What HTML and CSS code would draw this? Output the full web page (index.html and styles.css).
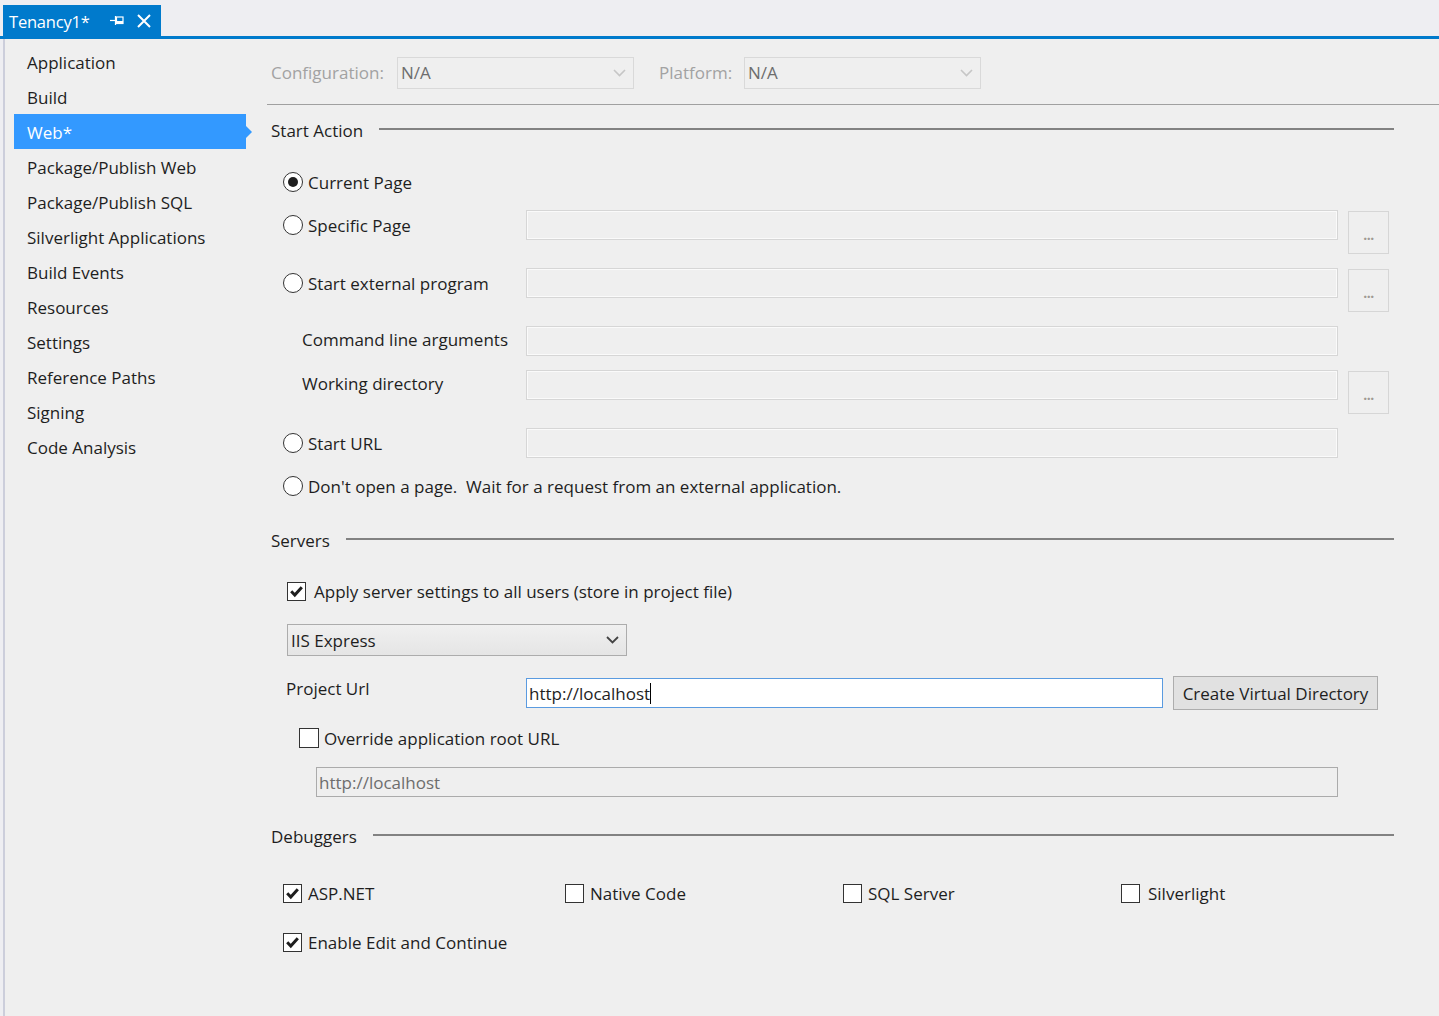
FILE: index.html
```html
<!DOCTYPE html>
<html>
<head>
<meta charset="utf-8">
<link rel="stylesheet" href="styles.css">
</head>
<body>
<div class="tabstrip">
  <div class="tab">
    <span class="tab-title">Tenancy1*</span>
    <svg class="pin" width="14" height="11" viewBox="0 0 14 11"><path d="M0 5.5H5" stroke="#fff" stroke-width="1.2"/><path d="M5.5 1V10" stroke="#fff" stroke-width="1.2"/><rect x="6.5" y="2" width="6.5" height="6.5" fill="none" stroke="#fff" stroke-width="1.2"/><rect x="6.5" y="6" width="6.5" height="2.5" fill="#fff"/></svg>
    <svg class="close" width="14" height="14" viewBox="0 0 14 14"><path d="M1 1L13 13M13 1L1 13" stroke="#fff" stroke-width="2"/></svg>
  </div>
</div>
<div class="tabline"></div>
<div class="workspace">
  <nav class="sidebar">
    <div class="nav-item">Application</div>
    <div class="nav-item">Build</div>
    <div class="nav-item active">Web*</div>
    <div class="nav-item">Package/Publish Web</div>
    <div class="nav-item">Package/Publish SQL</div>
    <div class="nav-item">Silverlight Applications</div>
    <div class="nav-item">Build Events</div>
    <div class="nav-item">Resources</div>
    <div class="nav-item">Settings</div>
    <div class="nav-item">Reference Paths</div>
    <div class="nav-item">Signing</div>
    <div class="nav-item">Code Analysis</div>
  </nav>
  <main class="main">
    <div class="config-row">
      <span class="config-label">Configuration:</span>
      <div class="combo disabled">
        <span>N/A</span>
        <svg width="13" height="8" viewBox="0 0 13 8"><path d="M1 1L6.5 6.5L12 1" fill="none" stroke="#c6c6c6" stroke-width="1.6"/></svg>
      </div>
      <span class="config-label platform">Platform:</span>
      <div class="combo disabled">
        <span>N/A</span>
        <svg width="13" height="8" viewBox="0 0 13 8"><path d="M1 1L6.5 6.5L12 1" fill="none" stroke="#c6c6c6" stroke-width="1.6"/></svg>
      </div>
    </div>
    <div class="config-rule"></div>

    <div class="content">
      <div class="section-head start-head"><span>Start Action</span><div class="rule"></div></div>

      <div class="start-grid">
        <div class="opt-row full"><span class="radio checked"></span><span>Current Page</span></div>

        <div class="opt-cell"><span class="radio"></span><span>Specific Page</span></div>
        <div class="textbox"></div>
        <div class="ellipsis">...</div>

        <div class="opt-cell"><span class="radio"></span><span>Start external program</span></div>
        <div class="textbox"></div>
        <div class="ellipsis">...</div>

        <div class="opt-cell sub">Command line arguments</div>
        <div class="textbox"></div>
        <div></div>

        <div class="opt-cell sub">Working directory</div>
        <div class="textbox"></div>
        <div class="ellipsis">...</div>

        <div class="opt-cell"><span class="radio"></span><span>Start URL</span></div>
        <div class="textbox"></div>
        <div></div>

        <div class="opt-row full"><span class="radio"></span><span>Don't open a page.&nbsp; Wait for a request from an external application.</span></div>
      </div>

      <div class="section-head servers-head"><span>Servers</span><div class="rule"></div></div>

      <div class="check-row apply-row">
        <span class="checkbox checked"><svg width="17" height="17" viewBox="0 0 17 17"><path d="M3.2 8.3L6.8 12L13.8 4.3" fill="none" stroke="#1e1e1e" stroke-width="3"/></svg></span>
        <span>Apply server settings to all users (store in project file)</span>
      </div>

      <div class="combo server-combo">
        <span>IIS Express</span>
        <svg width="13" height="8" viewBox="0 0 13 8"><path d="M1 1L6.5 6.5L12 1" fill="none" stroke="#444" stroke-width="1.8"/></svg>
      </div>

      <div class="url-row">
        <span class="url-label">Project Url</span>
        <div class="url-input"><span>http://localhost</span><span class="caret"></span></div>
        <div class="btn">Create Virtual Directory</div>
      </div>

      <div class="check-row override-row">
        <span class="checkbox"></span>
        <span>Override application root URL</span>
      </div>

      <div class="root-url">http://localhost</div>

      <div class="section-head debug-head"><span>Debuggers</span><div class="rule"></div></div>

      <div class="debug-grid">
        <div class="check-row">
          <span class="checkbox checked"><svg width="17" height="17" viewBox="0 0 17 17"><path d="M3.2 8.3L6.8 12L13.8 4.3" fill="none" stroke="#1e1e1e" stroke-width="3"/></svg></span>
          <span>ASP.NET</span>
        </div>
        <div class="check-row">
          <span class="checkbox"></span>
          <span>Native Code</span>
        </div>
        <div class="check-row">
          <span class="checkbox"></span>
          <span>SQL Server</span>
        </div>
        <div class="check-row wide">
          <span class="checkbox"></span>
          <span>Silverlight</span>
        </div>
      </div>

      <div class="check-row edit-row">
        <span class="checkbox checked"><svg width="17" height="17" viewBox="0 0 17 17"><path d="M3.2 8.3L6.8 12L13.8 4.3" fill="none" stroke="#1e1e1e" stroke-width="3"/></svg></span>
        <span>Enable Edit and Continue</span>
      </div>
    </div>
  </main>
</div>
</body>
</html>
```

FILE: styles.css
```css
* { box-sizing: border-box; }
html, body { margin: 0; padding: 0; }
body {
  background: #eeeef2;
  font-family: "Open Sans", "Noto Sans", "Liberation Sans", sans-serif;
  font-size: 17px;
  color: #1e1e1e;
  width: 1439px;
  height: 1016px;
  overflow: hidden;
}

/* tab strip */
.tabstrip {
  height: 36px;
  padding: 5px 0 0 3px;
}
.tab {
  width: 158px;
  height: 31px;
  background: #007acc;
  color: #fff;
  display: flex;
  align-items: center;
  padding-left: 6px;
  padding-top: 2px;
}
.tab-title { font-size: 16.5px; letter-spacing: -0.2px; }
.pin { margin-left: 20px; margin-top: -2px; }
.close { margin-left: 13px; margin-top: -2px; }
.tabline { height: 3px; background: #007acc; }

/* workspace */
.workspace {
  display: flex;
  margin-left: 3px;
  border-left: 2px solid #cccedb;
  background: #efefef;
  height: 977px;
}
.sidebar {
  width: 232px;
  margin-left: 9px;
  padding-top: 5px;
  flex: none;
}
.nav-item {
  height: 35px;
  line-height: 35px;
  padding-left: 13px;
  padding-top: 1px;
  white-space: nowrap;
  position: relative;
}
.nav-item.active {
  background: #3399ff;
  color: #fff;
}
.nav-item.active::after {
  content: "";
  position: absolute;
  right: -6px;
  top: 12px;
  border-left: 6px solid #3399ff;
  border-top: 6px solid transparent;
  border-bottom: 6px solid transparent;
}

.main {
  flex: 1;
  margin-left: 21px;
  padding-top: 17px;
}
.config-row {
  display: flex;
  align-items: center;
  height: 32px;
  padding-left: 4px;
  padding-top: 1px;
}
.config-label { color: #a2a2a2; width: 126px; }
.config-label.platform { width: 85px; margin-left: 25px; }
.combo {
  width: 237px;
  height: 32px;
  border: 1px solid #d9d9d9;
  display: flex;
  align-items: center;
  justify-content: space-between;
  padding: 0 7px 0 3px;
}
.combo.disabled { color: #6d6d6d; }
.config-rule {
  margin-top: 16px;
  height: 1px;
  background: #a0a0a0;
}

.content {
  padding: 0 45px 0 4px;
}
.section-head {
  display: flex;
  align-items: center;
  height: 20px;
}
.section-head .rule {
  flex: 1;
  height: 2px;
  background: #828282;
  margin-left: 16px;
  margin-bottom: 3px;
}
.start-head { margin-top: 15px; }
.servers-head { margin-top: 30px; }
.debug-head { margin-top: 29px; }

.start-grid {
  margin-top: 28px;
  margin-left: 12px;
  display: grid;
  grid-template-columns: 233px 812px 41px;
  column-gap: 10px;
  row-gap: 14px;
  align-items: start;
}
.opt-row {
  grid-column: 1 / -1;
  height: 28px;
  display: flex;
  align-items: center;
  white-space: nowrap;
}
.opt-cell {
  height: 30px;
  display: flex;
  align-items: center;
  white-space: nowrap;
}
.opt-cell.sub { padding-left: 19px; padding-bottom: 3px; }
.radio {
  width: 20px;
  height: 20px;
  border: 1px solid #333;
  border-radius: 50%;
  background: #fff;
  margin-right: 5px;
  flex: none;
  display: flex;
  align-items: center;
  justify-content: center;
}
.radio.checked::after {
  content: "";
  width: 10px;
  height: 10px;
  border-radius: 50%;
  background: #1e1e1e;
}
.textbox {
  height: 30px;
  border: 1px solid #d6d6d6;
  box-shadow: inset 0 0 0 1px #fafafa;
  background: #efefef;
}
.ellipsis {
  margin-top: 1px;
  height: 43px;
  border: 1px solid #d6d6d6;
  background: #efefef;
  color: #a09a94;
  font-size: 14px;
  line-height: 1;
  display: flex;
  justify-content: center;
  align-items: center;
  padding-top: 4px;
  letter-spacing: -0.5px;
  font-weight: bold;
}

.check-row {
  display: flex;
  align-items: center;
  height: 28px;
  white-space: nowrap;
}
.checkbox {
  width: 19px;
  height: 19px;
  border: 1px solid #333;
  background: #fff;
  flex: none;
  margin-right: 6px;
  display: flex;
  align-items: center;
  justify-content: center;
}
.apply-row { margin-top: 27px; margin-left: 16px; }
.apply-row .checkbox { margin-right: 8px; }
.server-combo {
  margin-top: 19px;
  margin-left: 16px;
  width: 340px;
  height: 32px;
  border: 1px solid #acacac;
  background: linear-gradient(#f0f0f0, #e5e5e5);
  padding: 0 7px 0 3px;
}

.url-row {
  margin-top: 20px;
  display: flex;
  align-items: center;
  height: 34px;
  margin-left: 15px;
}
.url-label {
  width: 240px;
  align-self: flex-start;
  line-height: 25px;
}
.url-input {
  width: 637px;
  height: 30px;
  border: 1px solid #5a9be0;
  background: #fff;
  display: flex;
  align-items: center;
  padding-left: 2px;
  padding-top: 1px;
}
.caret {
  width: 1px;
  height: 21px;
  background: #000;
}
.btn {
  margin-left: 10px;
  width: 205px;
  height: 34px;
  border: 1px solid #adadad;
  background: #e1e1e1;
  display: flex;
  align-items: center;
  justify-content: center;
}
.override-row { margin-top: 14px; margin-left: 28px; }
.override-row .checkbox { margin-right: 5px; width: 20px; height: 20px; }
.root-url {
  margin-top: 15px;
  margin-left: 45px;
  width: 1022px;
  height: 30px;
  border: 1px solid #ababab;
  color: #6d6d6d;
  display: flex;
  align-items: center;
  padding-left: 2px;
  padding-top: 1px;
}

.debug-grid {
  margin-top: 33px;
  margin-left: 12px;
  display: grid;
  grid-template-columns: 282px 278px 278px auto;
}
.check-row.wide .checkbox { margin-right: 8px; }
.edit-row { margin-top: 21px; margin-left: 12px; }
```
